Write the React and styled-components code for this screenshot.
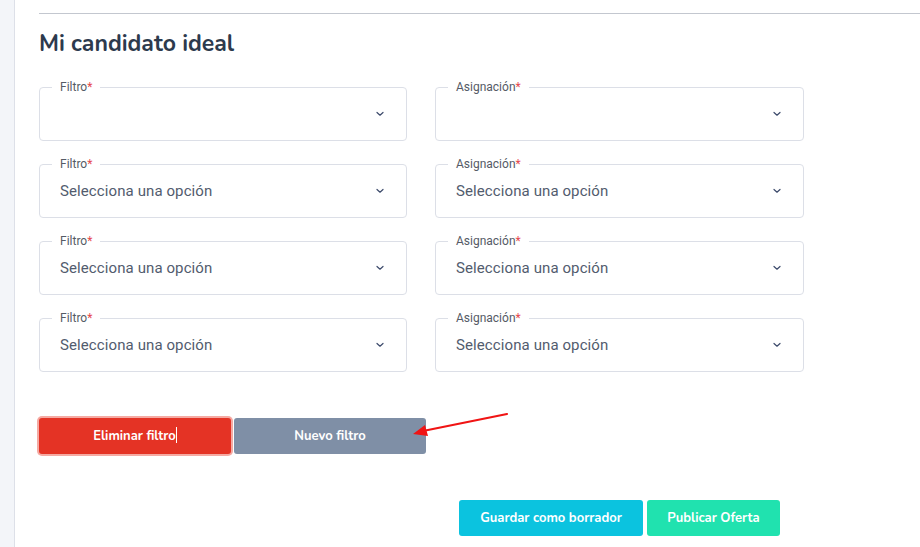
import React from "react";
import styled, { createGlobalStyle } from "styled-components";

const GlobalStyle = createGlobalStyle`
  html, body { margin: 0; padding: 0; background: #ffffff; }
  body { font-family: "Nunito", "Lato", sans-serif; }
`;

const Page = styled.div`
  display: flex;
  width: 920px;
  height: 547px;
  overflow: hidden;
`;

const Sidebar = styled.div`
  width: 14px;
  flex-shrink: 0;
  background: #f3f5f9;
  border-right: 1px solid #dde0e8;
`;

const Content = styled.div`
  flex: 1;
  padding: 13px 0 0 24px;
`;

const Divider = styled.div`
  height: 1px;
  background: #c3c7cf;
`;

const Title = styled.h2`
  margin: 15px 0 0 0;
  font-family: "Nunito", "Lato", sans-serif;
  font-weight: 700;
  font-size: 23px;
  line-height: 30px;
  color: #2d3a4d;
`;

const FieldGrid = styled.div`
  display: grid;
  grid-template-columns: 368px 369px;
  column-gap: 28px;
  row-gap: 23px;
  margin-top: 28px;
`;

const Field = styled.div`
  position: relative;
  height: 54px;
  box-sizing: border-box;
  border: 1px solid #dcdfe7;
  border-radius: 4px;
  display: flex;
  align-items: center;
  padding: 0 20px 0 20px;
`;

const Legend = styled.span`
  position: absolute;
  top: -8px;
  left: 12px;
  padding: 0 8px;
  background: #ffffff;
  font-family: "Roboto", sans-serif;
  font-size: 12px;
  line-height: 14px;
  color: #555b66;
`;

const Required = styled.span`
  color: #e5484d;
`;

const Value = styled.span`
  flex: 1;
  font-family: "Roboto", sans-serif;
  font-size: 15px;
  color: #525c6e;
  letter-spacing: 0.1px;
`;

const Chevron = () => (
  <svg width="10" height="6" viewBox="0 0 10 6" fill="none" style={{ marginRight: 1 }}>
    <path d="M2 1.5 L5 4.2 L8 1.5" stroke="#3c4a6b" strokeWidth="1.2" strokeLinecap="round" strokeLinejoin="round" />
  </svg>
);

const ActionRow = styled.div`
  position: relative;
  display: flex;
  gap: 3px;
  margin-top: 46px;
`;

const Button = styled.button`
  height: 36px;
  width: ${p => p.$width}px;
  border: none;
  border-radius: 3px;
  background: ${p => p.$bg};
  color: #ffffff;
  font-family: "Nunito", "Lato", sans-serif;
  font-weight: 700;
  font-size: 13px;
  cursor: pointer;
  padding: 0;
  box-shadow: ${p => (p.$focus ? "0 0 0 2px #f5aaa3" : "none")};
`;

const Caret = styled.span`
  display: inline-block;
  width: 1px;
  height: 16px;
  background: #ffffff;
  vertical-align: -3px;
`;

const Arrow = styled.svg`
  position: absolute;
  left: 370px;
  top: -8px;
`;

const FooterRow = styled.div`
  display: flex;
  justify-content: flex-end;
  gap: 4px;
  width: 741px;
  margin-top: 46px;
`;

const rows = [false, true, true, true];

export default function App() {
  return (
    <>
      <GlobalStyle />
      <Page>
        <Sidebar />
        <Content>
          <Divider />
          <Title>Mi candidato ideal</Title>
          <FieldGrid>
            {rows.map((filled, i) => (
              <React.Fragment key={i}>
                <Field>
                  <Legend>Filtro<Required>*</Required></Legend>
                  <Value>{filled ? "Selecciona una opción" : ""}</Value>
                  <Chevron />
                </Field>
                <Field>
                  <Legend>Asignación<Required>*</Required></Legend>
                  <Value>{filled ? "Selecciona una opción" : ""}</Value>
                  <Chevron />
                </Field>
              </React.Fragment>
            ))}
          </FieldGrid>
          <ActionRow>
            <Button $width={192} $bg="#e43325" $focus>
              Eliminar filtro<Caret />
            </Button>
            <Button $width={192} $bg="#7f8fa6">Nuevo filtro</Button>
            <Arrow width="100" height="30" viewBox="0 0 100 30">
              <line x1="98" y1="4" x2="14" y2="21" stroke="#f01414" strokeWidth="2.2" strokeLinecap="round" />
              <polygon points="4,24 16,15 19,26" fill="#f01414" />
            </Arrow>
          </ActionRow>
          <FooterRow>
            <Button $width={184} $bg="#0bc3df">Guardar como borrador</Button>
            <Button $width={133} $bg="#20e2af">Publicar Oferta</Button>
          </FooterRow>
        </Content>
      </Page>
    </>
  );
}
